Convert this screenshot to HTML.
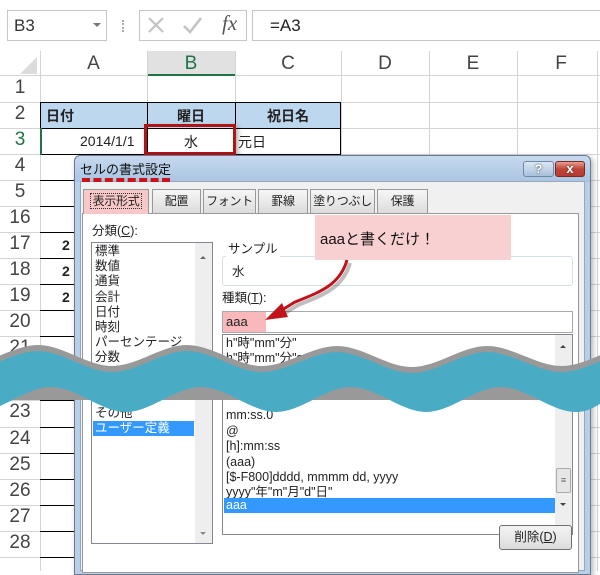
<!DOCTYPE html>
<html><head><meta charset="utf-8"><style>
*{margin:0;padding:0;box-sizing:border-box}
body{width:600px;height:561px;overflow:hidden;background:#fff;position:relative;font-family:"Liberation Sans","Noto Sans CJK JP",sans-serif;color:#222}
.a{position:absolute}
.hl{position:absolute;height:1px;background:#d4d4d4}
.vl{position:absolute;width:1px;background:#d4d4d4}
.rh{position:absolute;left:0;width:40px;text-align:center;font-size:19px;color:#444}
.ch{position:absolute;top:52px;height:24px;line-height:24px;text-align:center;font-size:19px;color:#444}
.jp{font-family:"Liberation Sans","Noto Sans CJK JP",sans-serif}
.it{position:absolute;font-size:12.5px;line-height:15px;white-space:nowrap}
.tab{position:absolute;top:189px;height:24px;background:linear-gradient(#f6f6f6,#dcdcdc);border:1px solid #999;border-bottom:none;font-size:12px;text-align:center;line-height:22px;white-space:nowrap;overflow:hidden;letter-spacing:-0.3px}
</style></head><body>
<!-- formula bar -->
<div class="a" style="left:7px;top:10px;width:100px;height:31px;border:1px solid #c6c6c6;font-size:17px;line-height:29px;padding-left:6px;color:#333">B3</div>
<div class="a" style="left:93px;top:23px;border-left:4px solid transparent;border-right:4px solid transparent;border-top:4px solid #777"></div>
<div class="a" style="left:122px;top:20px;width:2px;height:12px;border-left:2px dotted #aaa"></div>
<div class="a" style="left:139px;top:10px;width:108px;height:31px;border:1px solid #c6c6c6"></div>
<svg class="a" style="left:139px;top:10px" width="108" height="31">
<path d="M10 8 L24 22 M24 8 L10 22" stroke="#c4c4c4" stroke-width="2.2" fill="none"/>
<path d="M45 16 L51 22 L62 8" stroke="#c4c4c4" stroke-width="2.6" fill="none"/>
</svg>
<div class="a" style="left:222px;top:11px;font-size:21px;font-style:italic;font-family:'Liberation Serif',serif;color:#555">fx</div>
<div class="a" style="left:252px;top:10px;width:360px;height:31px;border:1px solid #c6c6c6;font-size:17px;line-height:29px;padding-left:17px;color:#222">=A3</div>
<!-- column headers -->
<div class="a" style="left:0;top:51px;width:600px;height:25px;background:#fff;border-bottom:1px solid #d4d4d4"></div>
<div class="a" style="left:20px;top:57px;width:0;height:0;border-left:17px solid transparent;border-bottom:17px solid #dcdcdc"></div>
<div class="a" style="left:147px;top:51px;width:88px;height:25px;background:#e1e1e1;border-bottom:2px solid #217346"></div>
<div class="ch" style="left:40px;width:107px">A</div>
<div class="ch" style="left:147px;width:88px;color:#217346">B</div>
<div class="ch" style="left:235px;width:106px">C</div>
<div class="ch" style="left:341px;width:88px">D</div>
<div class="ch" style="left:429px;width:88px">E</div>
<div class="ch" style="left:517px;width:88px">F</div>
<!-- grid -->
<div class="vl" style="left:40px;top:51px;height:520px"></div>
<div class="vl" style="left:147px;top:51px;height:103px"></div>
<div class="vl" style="left:235px;top:51px;height:103px"></div>
<div class="vl" style="left:341px;top:51px;height:520px"></div>
<div class="vl" style="left:429px;top:51px;height:520px"></div>
<div class="vl" style="left:517px;top:51px;height:520px"></div>
<div class="vl" style="left:597px;top:51px;height:520px"></div>
<div class="hl" style="left:0;top:102px;width:600px"></div>
<div class="hl" style="left:0;top:128px;width:600px"></div>
<div class="hl" style="left:0;top:154px;width:600px"></div>
<div class="hl" style="left:0;top:180px;width:600px"></div>
<div class="hl" style="left:0;top:206px;width:600px"></div>
<div class="hl" style="left:0;top:232px;width:600px"></div>
<div class="hl" style="left:0;top:258px;width:600px"></div>
<div class="hl" style="left:0;top:284px;width:600px"></div>
<div class="hl" style="left:0;top:310px;width:600px"></div>
<div class="hl" style="left:0;top:336px;width:600px"></div>
<div class="hl" style="left:0;top:362px;width:600px"></div>
<div class="hl" style="left:0;top:400px;width:600px"></div>
<div class="hl" style="left:0;top:427px;width:600px"></div>
<div class="hl" style="left:0;top:453px;width:600px"></div>
<div class="hl" style="left:0;top:479px;width:600px"></div>
<div class="hl" style="left:0;top:505px;width:600px"></div>
<div class="hl" style="left:0;top:531px;width:600px"></div>
<div class="hl" style="left:0;top:557px;width:600px"></div>
<!-- table black borders col A -->
<div class="a" style="left:40px;top:180px;width:40px;height:1px;background:#000"></div>
<div class="a" style="left:40px;top:206px;width:40px;height:1px;background:#000"></div>
<div class="a" style="left:40px;top:232px;width:40px;height:1px;background:#000"></div>
<div class="a" style="left:40px;top:258px;width:40px;height:1px;background:#000"></div>
<div class="a" style="left:40px;top:284px;width:40px;height:1px;background:#000"></div>
<div class="a" style="left:40px;top:310px;width:40px;height:1px;background:#000"></div>
<div class="a" style="left:40px;top:336px;width:40px;height:1px;background:#000"></div>
<div class="a" style="left:40px;top:400px;width:40px;height:1px;background:#000"></div>
<div class="a" style="left:40px;top:427px;width:40px;height:1px;background:#000"></div>
<div class="a" style="left:40px;top:453px;width:40px;height:1px;background:#000"></div>
<div class="a" style="left:40px;top:479px;width:40px;height:1px;background:#000"></div>
<div class="a" style="left:40px;top:505px;width:40px;height:1px;background:#000"></div>
<div class="a" style="left:40px;top:531px;width:40px;height:1px;background:#000"></div>
<div class="a" style="left:40px;top:557px;width:40px;height:1px;background:#000"></div>
<div class="a" style="left:62px;top:237px;font-size:14px;font-weight:bold">2</div>
<div class="a" style="left:62px;top:263px;font-size:14px;font-weight:bold">2</div>
<div class="a" style="left:62px;top:289px;font-size:14px;font-weight:bold">2</div>
<!-- table -->
<div class="a" style="left:40px;top:102px;width:301px;height:27px;background:#bdd7ee;border:1px solid #000"></div>
<div class="a" style="left:40px;top:128px;width:301px;height:27px;border:1px solid #000;border-top:none"></div>
<div class="a" style="left:147px;top:102px;width:1px;height:53px;background:#000"></div>
<div class="a" style="left:235px;top:102px;width:1px;height:53px;background:#000"></div>
<div class="a" style="left:40px;top:128px;width:2px;height:27px;background:#217346"></div>
<div class="a jp" style="left:46px;top:106px;font-size:14px;font-weight:bold">日付</div>
<div class="a jp" style="left:147px;top:106px;width:88px;text-align:center;font-size:14px;font-weight:bold">曜日</div>
<div class="a jp" style="left:235px;top:106px;width:106px;text-align:center;font-size:14px;font-weight:bold">祝日名</div>
<div class="a" style="left:80px;top:133px;font-size:14px">2014/1/1</div>
<div class="a jp" style="left:147px;top:132px;width:88px;text-align:center;font-size:14px">水</div>
<div class="a jp" style="left:238px;top:132px;font-size:14px">元日</div>
<div class="a" style="left:144px;top:124px;width:92px;height:31px;border:3px solid #b01416;box-shadow:2px 3px 5px rgba(0,0,0,.35)"></div>
<!-- row headers -->
<div class="rh" style="top:77px">1</div>
<div class="rh" style="top:103px">2</div>
<div class="rh" style="top:129px;color:#217346">3</div>
<div class="rh" style="top:155px">4</div>
<div class="rh" style="top:181px">5</div>
<div class="rh" style="top:207px">16</div>
<div class="rh" style="top:233px">17</div>
<div class="rh" style="top:259px">18</div>
<div class="rh" style="top:285px">19</div>
<div class="rh" style="top:311px">20</div>
<div class="rh" style="top:337px">21</div>
<div class="rh" style="top:401px">23</div>
<div class="rh" style="top:428px">24</div>
<div class="rh" style="top:454px">25</div>
<div class="rh" style="top:480px">26</div>
<div class="rh" style="top:506px">27</div>
<div class="rh" style="top:532px">28</div>
<!-- dialog -->
<div class="a" style="left:74px;top:155px;width:517px;height:420px;border:1px solid #6a7a90;border-radius:6px 6px 0 0;background:linear-gradient(#c7d9ee,#a9c4e2 26px,#b9cfe8 26px);box-shadow:2px 2px 6px rgba(0,0,0,.3)"></div>
<div class="a" style="left:80px;top:181px;width:505px;height:390px;background:#f0f0f0;border:1px solid #98a8bc"></div>
<div class="a jp" style="left:80px;top:159px;font-size:13px;color:#111">セルの書式設定</div>
<div class="a" style="left:82px;top:178px;width:88px;height:0;border-top:4px dashed #c8141a"></div>
<div class="a" style="left:523px;top:161px;width:31px;height:16px;border:1px solid #6f8aa8;border-radius:3px;background:linear-gradient(#dce8f4,#a8c0dc);text-align:center;font-size:12px;line-height:14px;color:#fff;font-weight:bold;text-shadow:0 0 2px #333">?</div>
<div class="a" style="left:555px;top:161px;width:30px;height:16px;border:1px solid #7a2a22;border-radius:3px;background:linear-gradient(#e8a090,#c0443a 50%,#b83a30);text-align:center;font-size:13px;line-height:14px;color:#fff;font-weight:bold;text-shadow:0 0 2px #333">x</div>
<!-- tabs -->
<div class="a" style="left:82px;top:213px;width:497px;height:360px;background:#fff;border:1px solid #999"></div>
<div class="tab" style="left:83px;width:66px;background:#f8c8c8;height:25px"><span style="border:1px dotted #333;padding:0 2px">表示形式</span></div>
<div class="tab" style="left:152px;width:49px">配置</div>
<div class="tab" style="left:203px;width:53px">フォント</div>
<div class="tab" style="left:258px;width:50px">罫線</div>
<div class="tab" style="left:310px;width:65px">塗りつぶし</div>
<div class="tab" style="left:377px;width:51px">保護</div>
<div class="it" style="left:92px;top:224px">分類(<u>C</u>):</div>
<div class="a" style="left:91px;top:242px;width:122px;height:302px;border:1px solid #828790;background:#fff"></div>
<div class="a" style="left:195px;top:243px;width:17px;height:300px;background:#eee"></div>
<div class="a" style="left:200px;top:256px;border-left:3px solid transparent;border-right:3px solid transparent;border-bottom:3px solid #666"></div>
<div class="a" style="left:200px;top:532px;border-left:3px solid transparent;border-right:3px solid transparent;border-top:3px solid #888"></div>
<div class="it" style="left:95px;top:244px">標準</div>
<div class="it" style="left:95px;top:259px">数値</div>
<div class="it" style="left:95px;top:274px">通貨</div>
<div class="it" style="left:95px;top:290px">会計</div>
<div class="it" style="left:95px;top:305px">日付</div>
<div class="it" style="left:95px;top:320px">時刻</div>
<div class="it" style="left:95px;top:335px">パーセンテージ</div>
<div class="it" style="left:95px;top:350px">分数</div>
<div class="it" style="left:95px;top:406px">その他</div>
<div class="a" style="left:93px;top:421px;width:101px;height:15px;background:#3399ff"></div>
<div class="it" style="left:95px;top:421px;color:#fff">ユーザー定義</div>
<!-- sample -->
<div class="a" style="left:222px;top:256px;width:351px;height:30px;border:1px solid #d5dfe5;border-radius:3px"></div>
<div class="it" style="left:226px;top:242px;background:#fff;padding:0 2px">サンプル</div>
<div class="it" style="left:232px;top:265px">水</div>
<div class="it" style="left:222px;top:291px">種類(<u>T</u>):</div>
<div class="a" style="left:222px;top:311px;width:351px;height:22px;border:1px solid #aaa;background:#fff"></div>
<div class="a" style="left:223px;top:312px;width:43px;height:20px;background:#f8b8bc"></div>
<div class="it" style="left:226px;top:314px;font-size:13px">aaa</div>
<div class="a" style="left:222px;top:334px;width:351px;height:201px;border:1px solid #828790;background:#fff"></div>
<div class="a" style="left:555px;top:335px;width:17px;height:199px;background:#eee"></div>
<div class="a" style="left:556px;top:468px;width:15px;height:25px;background:#e6e6e6;border:1px solid #aaa;border-radius:2px;text-align:center;font-size:9px;line-height:22px;color:#666">≡</div>
<div class="a" style="left:560px;top:345px;border-left:3px solid transparent;border-right:3px solid transparent;border-bottom:3px solid #444"></div>
<div class="a" style="left:560px;top:503px;border-left:3px solid transparent;border-right:3px solid transparent;border-top:3px solid #444"></div>
<div class="it" style="left:226px;top:336px">h"時"mm"分"</div>
<div class="it" style="left:226px;top:351px">h"時"mm"分"ss"秒"</div>
<div class="it" style="left:226px;top:408px">mm:ss.0</div>
<div class="it" style="left:226px;top:424px">@</div>
<div class="it" style="left:226px;top:439px">[h]:mm:ss</div>
<div class="it" style="left:226px;top:455px">(aaa)</div>
<div class="it" style="left:226px;top:470px">[$-F800]dddd, mmmm dd, yyyy</div>
<div class="it" style="left:226px;top:485px">yyyy"年"m"月"d"日"</div>
<div class="a" style="left:224px;top:498px;width:331px;height:15px;background:#3399ff"></div>
<div class="it" style="left:226px;top:498px;color:#fff">aaa</div>
<div class="a" style="left:499px;top:525px;width:73px;height:25px;border:1px solid #707070;border-radius:3px;background:linear-gradient(#f4f4f4,#dcdcdc);text-align:center;font-size:12.5px;line-height:23px">削除(<u>D</u>)</div>
<!-- callout -->
<div class="a" style="left:315px;top:215px;width:196px;height:45px;background:#f8d0d2"></div>
<div class="a jp" style="left:320px;top:228px;font-size:15px;color:#111">aaaと書くだけ！</div>
<svg class="a" style="left:0;top:0" width="600" height="561">
<path d="M347 260 C340 285 320 292 295 302 L282 310" fill="none" stroke="rgba(0,0,0,.25)" stroke-width="4" transform="translate(3,3)"/>
<path d="M347 260 C340 285 320 292 295 302 L282 310" fill="none" stroke="#c0141c" stroke-width="3"/>
<polygon points="265,320 282,303 288,317" fill="#c0141c"/>
<path d="M-38 366 C-13 366 13 345 38 345 C63 345 87 366 112 366 C137 366 162 345 187 345 C212 345 237 366 262 366 C287 366 312 346 337 346 C362 346 387 367 412 367 C437 367 462 346 487 346 C512 346 537 366 562 366 C587 366 612 345 637 345 L637 400 L-38 400 Z" fill="#999"/>
<path d="M-38 372 C-13 372 13 351 38 351 C63 351 87 372 112 372 C137 372 162 351 187 351 C212 351 237 372 262 372 C287 372 312 352 337 352 C362 352 387 373 412 373 C437 373 462 352 487 352 C512 352 537 372 562 372 C587 372 612 351 637 351 L637 387 C612 387 601 412 576 412 C551 412 526 387 501 387 C476 387 451 412 426 412 C401 412 376 387 351 387 C326 387 301 412 276 412 C251 412 226 387 201 387 C176 387 151 412 126 412 C101 412 76 387 51 387 C26 387 1 412 -24 412 L-38 412 Z" fill="#4aabc5"/>
</svg>
</body></html>
